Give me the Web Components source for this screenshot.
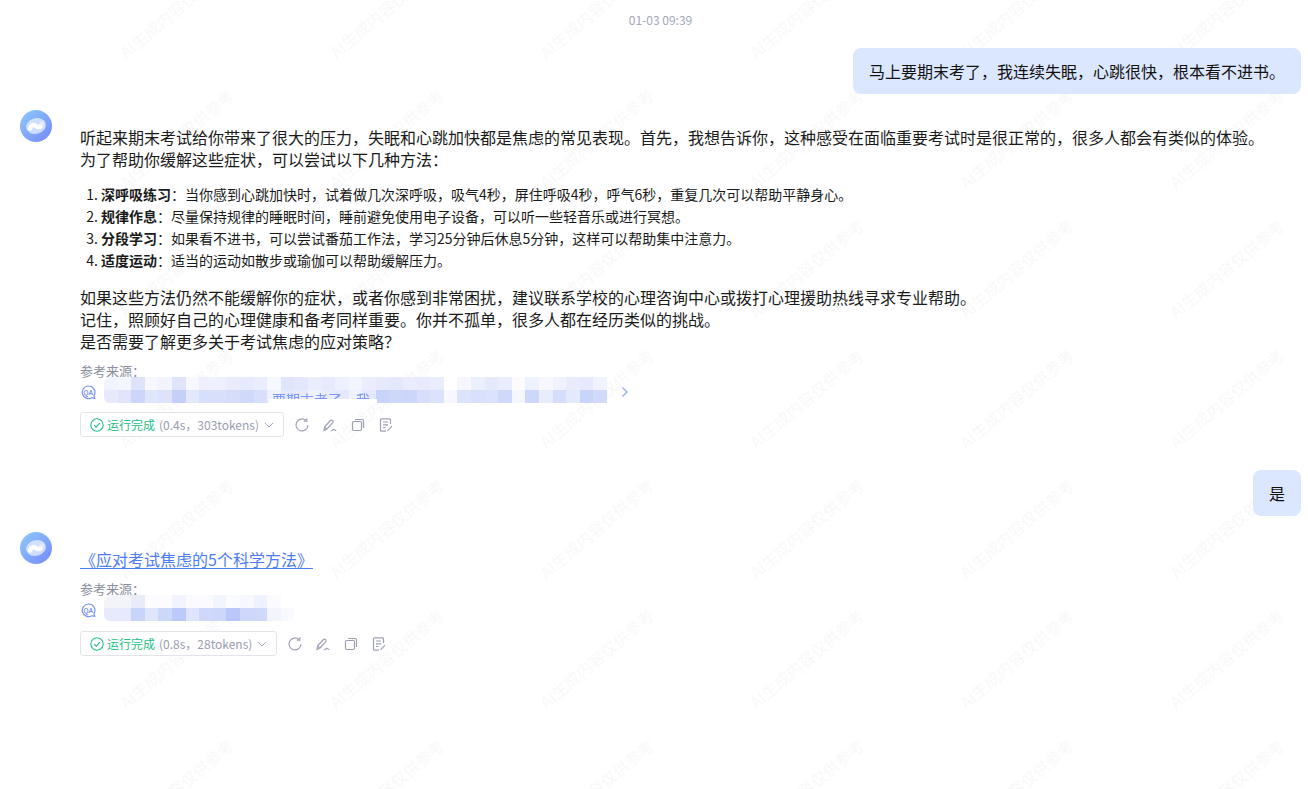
<!DOCTYPE html>
<html lang="zh">
<head>
<meta charset="utf-8">
<title>chat</title>
<style>
  html, body { margin: 0; height: 100%; background: #fff; }
  body {
    font-family: "Noto Sans CJK SC", "Noto Sans", sans-serif;
    color: #1a1a1a;
    overflow: hidden;
    position: relative;
    height: 789px;
  }
</style>
</head>
<body>
<chat-watermark></chat-watermark>
<chat-page>
  <chat-time>01-03 09:39</chat-time>
  <user-msg>马上要期末考了，我连续失眠，心跳很快，根本看不进书。</user-msg>
  <bot-msg>
    <md-block>
      <p>听起来期末考试给你带来了很大的压力，失眠和心跳加快都是焦虑的常见表现。首先，我想告诉你，这种感受在面临重要考试时是很正常的，很多人都会有类似的体验。<br>为了帮助你缓解这些症状，可以尝试以下几种方法：</p>
      <ol>
        <li><b>深呼吸练习</b>：当你感到心跳加快时，试着做几次深呼吸，吸气4秒，屏住呼吸4秒，呼气6秒，重复几次可以帮助平静身心。</li>
        <li><b>规律作息</b>：尽量保持规律的睡眠时间，睡前避免使用电子设备，可以听一些轻音乐或进行冥想。</li>
        <li><b>分段学习</b>：如果看不进书，可以尝试番茄工作法，学习25分钟后休息5分钟，这样可以帮助集中注意力。</li>
        <li><b>适度运动</b>：适当的运动如散步或瑜伽可以帮助缓解压力。</li>
      </ol>
      <p>如果这些方法仍然不能缓解你的症状，或者你感到非常困扰，建议联系学校的心理咨询中心或拨打心理援助热线寻求专业帮助。<br>记住，照顾好自己的心理健康和备考同样重要。你并不孤单，很多人都在经历类似的挑战。<br>是否需要了解更多关于考试焦虑的应对策略？</p>
    </md-block>
    <source-list wide></source-list>
    <run-bar time="0.4s" tokens="303tokens"></run-bar>
  </bot-msg>
  <user-msg style="margin-top:33px">是</user-msg>
  <bot-msg>
    <md-block><p><a href="#">《应对考试焦虑的5个科学方法》</a></p></md-block>
    <source-list></source-list>
    <run-bar time="0.8s" tokens="28tokens" style="margin-top:11px"></run-bar>
  </bot-msg>
</chat-page>

<script>
class ChatPage extends HTMLElement {
  constructor() {
    super();
    this.attachShadow({ mode: 'open' });
    this.shadowRoot.innerHTML = `
      <style>
        :host { display: flex; flex-direction: column; padding: 0 7px 0 20px; position: relative; }
      </style>
      <slot></slot>`;
  }
}

class ChatTime extends HTMLElement {
  constructor() {
    super();
    this.attachShadow({ mode: 'open' });
    this.shadowRoot.innerHTML = `
      <style>
        :host { display: block; height: 48px; padding-top: 11px; box-sizing: border-box; text-align: center; font-size: 12px; line-height: 17px; color: #a3a6ba; }
      </style>
      <slot></slot>`;
  }
}

class UserMsg extends HTMLElement {
  constructor() {
    super();
    this.attachShadow({ mode: 'open' });
    this.shadowRoot.innerHTML = `
      <style>
        :host { display: flex; justify-content: flex-end; }
        div { background: #dbe7fe; border-radius: 8px; padding: 12px 16px; font-size: 16px; line-height: 22px; color: #111; }
      </style>
      <div><slot></slot></div>`;
  }
}

class BotMsg extends HTMLElement {
  constructor() {
    super();
    this.attachShadow({ mode: 'open' });
    this.shadowRoot.innerHTML = `
      <style>
        :host { display: flex; gap: 28px; margin-top: 16px; }
        .avatar { flex: none; width: 32px; height: 32px; }
        .body { flex: 1; min-width: 0; padding-top: 16px; }
      </style>
      <div class="avatar">
        <svg width="32" height="32" viewBox="0 0 32 32">
          <defs>
            <linearGradient id="g" x1="0" y1="0" x2="1" y2="1">
              <stop offset="0" stop-color="#8fcbfb"/><stop offset="1" stop-color="#7488fb"/>
            </linearGradient>
            <linearGradient id="w" x1="0" y1="1" x2="1" y2="0">
              <stop offset="0" stop-color="#fff"/><stop offset=".6" stop-color="#fff"/><stop offset="1" stop-color="#e4eafe"/>
            </linearGradient>
          </defs>
          <circle cx="16" cy="16" r="16" fill="url(#g)"/>
          <ellipse cx="16" cy="16" rx="10" ry="7.800" transform="rotate(-15 16 16)" fill="#e3ebff" opacity=".8"/>
          <path d="M10 18.500C11.500 14.500 14 14.500 16 16S20.500 18 22 13.500" fill="none" stroke="url(#w)" stroke-width="4.500" stroke-linecap="round"/>
        </svg>
      </div>
      <div class="body"><slot></slot></div>`;
  }
}

class MdBlock extends HTMLElement {
  connectedCallback() {
    // the content is moved into the shadow so ol/p get their styles here
    const html = this.innerHTML;
    this.innerHTML = '';
    this.attachShadow({ mode: 'open' }).innerHTML = `
      <style>
        :host { display: block; font-size: 16px; line-height: 22px; color: #1a1a1a; }
        p { margin: 0; }
        ol { margin: 13px 0 15px; padding: 0 0 0 21px; font-size: 14px; line-height: 22px; }
        a { color: #4d7cf6; text-decoration: underline; text-underline-offset: 2px; }
      </style>
      ${html}`;
  }
}

// blurred out rows, each cell is one block of the mosaic
const wideCells = [
  ['f1f3fe','f4f6fe','dde3fb','f7f8ff','f1f3fe','dfe4fb','f6f7ff','eef1fd','eef0fd','e9ecfd','e6eafc','e9edfd','f6f8ff','dfe5fb','e2e7fc','e9edfd','e6eafc','edf0fd','f3f5fe','eaedfd','e6eafc','e3e8fc','e9ecfd','e6eafc','eaedfd','ffffff','f5f6fe','eceffd','e5e9fc','e9edfd','fcfcff','eef1fe','f7f8ff','f0f2fe','e9ecfd','e6eafc','f0f2fe'],
  ['e6eafc','e0e5fc','ccd6fa','dfe5fb','dde3fb','c4d0f9','e3e8fc','d8dffb','d8dffb','d5ddfb','d0d9fa','d8dffb','eef1fe','e5e9fd','e6eafc','eef1fe','e9ecfd','e4e8fc','eef1fe','e5e9fd','c8d3f9','cdd7fa','ccd6fa','d6defb','dbe2fb','f6f7ff','dde3fb','d9e0fb','dbe2fb','d0d9fa','f5f7ff','cdd7fa','e8ecfd','d5ddfb','e5e9fd','c9d4fa','d2dafb']
];
const shortCells = [
  ['f3f4fa','f3f4fa','e9ebf8','fcfcff','fcfcff','f1f3fe','fbfbff','fbfbff','f3f5fe','fafbff','f7f8ff','eef1fe','fafaff','ffffff'],
  ['e6eafc','e6eafc','c9d4fa','dfe5fb','cdd7fa','bcc9f9','dfe5fc','cfd8fa','cdd7fa','bac8f9','cfd8fa','d0d9fa','f3f5fe','f9faff']
];

class SourceList extends HTMLElement {
  connectedCallback() {
    const wide = this.hasAttribute('wide');
    const rows = (wide ? wideCells : shortCells).map(r =>
      `<div class="r">${r.map(c => `<i style="background:#${c}"></i>`).join('')}</div>`).join('');
    this.attachShadow({ mode: 'open' }).innerHTML = `
      <style>
        :host { display: block; margin-top: ${wide ? 10 : 10}px; }
        .label { font-size: 13px; line-height: 18px; color: #8c8f9e; }
        .src { display: flex; align-items: center; height: 20px; margin-top: ${wide ? 2 : 2}px; gap: 8px; }
        .icon { flex: none; margin-left: 1px; }
        .mosaic { display: flex; flex-direction: column; position: relative; margin-top: -5px; filter: blur(.7px); border-radius: 6px 0 0 6px; overflow: hidden; }
        .r { display: flex; height: 13px; }
        i { display: block; width: 13.6px; }
        .peek { position: absolute; left: 168px; top: 13px; height: 9px; width: 100px; overflow: hidden; font-size: 14px; line-height: 18px; color: #7e97f6; white-space: nowrap; }
        .cover { position: absolute; left: 165px; top: 22px; height: 4px; width: 108px; background: #fff; }
        .tail { margin-left: 6px; display: flex; }
      </style>
      <div class="label">参考来源：</div>
      <div class="src">
        <svg class="icon" width="15" height="15" viewBox="0 0 15 15" fill="none" stroke="#7a93f5" stroke-width="1.200">
          <path d="M7.500 1a6.300 6.300 0 1 0 3.300 11.700l2.900.8-.7-2.900A6.300 6.300 0 0 0 7.500 1z"/>
          <text x="7.300" y="9.600" text-anchor="middle" font-size="6.500" font-weight="700" stroke="none" fill="#7a93f5" font-family="Liberation Sans, sans-serif">QA</text>
        </svg>
        <div class="mosaic">${rows}${wide ? '<span class="cover"></span><span class="peek">要期末考了，我</span>' : ''}</div>
        ${wide ? `<span class="tail"><svg width="8" height="12" viewBox="0 0 8 12" fill="none" stroke="#8ea6f8" stroke-width="1.200"><path d="M1.500 1.500 6 6l-4.500 4.500"/></svg></span>` : ''}
      </div>`;
  }
}

class RunBar extends HTMLElement {
  connectedCallback() {
    const time = this.getAttribute('time');
    const tokens = this.getAttribute('tokens');
    this.attachShadow({ mode: 'open' }).innerHTML = `
      <style>
        :host { display: flex; align-items: center; margin-top: 10px; }
        .pill { display: flex; align-items: center; height: 25px; box-sizing: border-box; border: 1px solid #e2e4ea; border-radius: 3px; padding: 0 9px; font-size: 12px; background: #fff; }
        .ok { color: #1fbf85; margin: 0 4px 0 3px; }
        .meta { color: #9a9db0; }
        .down { margin-left: 5px; }
        .tools { display: flex; gap: 12px; margin-left: 10px; }
        .tools svg { display: block; }
      </style>
      <div class="pill">
        <svg width="14" height="14" viewBox="0 0 14 14" fill="none" stroke="#1fbf85" stroke-width="1.100"><circle cx="7" cy="7" r="6.200"/><path d="M4.200 7.200l2 2 3.600-4"/></svg>
        <span class="ok">运行完成</span><span class="meta">(${time}，${tokens})</span>
        <svg class="down" width="10" height="10" viewBox="0 0 10 10" fill="none" stroke="#a3a6ba" stroke-width="1"><path d="M1 3l4 4 4-4"/></svg>
      </div>
      <div class="tools">
        <svg width="16" height="16" viewBox="0 0 16 16" fill="none" stroke="#9ea1b4" stroke-width="1.200"><path d="M14 8.300A6 6 0 1 1 11.800 3.300M12.800 1.200v3h-3"/></svg>
        <svg width="16" height="16" viewBox="0 0 16 16" fill="none" stroke="#9ea1b4" stroke-width="1.200"><path d="M2 13.500l.6-3.600 5.900-6.400a1.300 1.300 0 0 1 1.900 0l.3.300a1.300 1.300 0 0 1 0 1.900L5 12zM2.600 9.900L5 12M8.800 14c1.500 0 1.700-1.700 3-1.700s1 1.300 2.500 1.100"/></svg>
        <svg width="16" height="16" viewBox="0 0 16 16" fill="none" stroke="#9ea1b4" stroke-width="1.200"><rect x="2.500" y="4.500" width="9" height="9" rx="1.200"/><path d="M5 2.500h7.300a1.200 1.200 0 0 1 1.200 1.200V11"/></svg>
        <svg width="16" height="16" viewBox="0 0 16 16" fill="none" stroke="#9ea1b4" stroke-width="1.200"><path d="M12.500 7V2.800a1 1 0 0 0-1-1h-8a1 1 0 0 0-1 1v10.400a1 1 0 0 0 1 1h4.500M5 5h5M5 7.800h5M5 10.500h2.500M9.500 13.800l4.500-4.600"/></svg>
      </div>`;
  }
}

class ChatWatermark extends HTMLElement {
  connectedCallback() {
    let marks = '';
    for (let row = 0; row < 7; row++) {
      for (let col = 0; col < 6; col++) {
        // left/top are the free canvas places of the repeated mark
        marks += `<span style="left:${127 + col * 210}px;top:${60 + row * 130}px">AI生成内容仅供参考</span>`;
      }
    }
    this.attachShadow({ mode: 'open' }).innerHTML = `
      <style>
        :host { position: absolute; inset: 0; overflow: hidden; pointer-events: none; display: block; }
        span { position: absolute; font-size: 16px; line-height: 1; white-space: nowrap; color: #f8f8fa; transform-origin: 0 100%; transform: translateY(-16px) rotate(-40deg); }
      </style>
      ${marks}`;
  }
}

customElements.define('chat-page', ChatPage);
customElements.define('chat-time', ChatTime);
customElements.define('user-msg', UserMsg);
customElements.define('bot-msg', BotMsg);
customElements.define('md-block', MdBlock);
customElements.define('source-list', SourceList);
customElements.define('run-bar', RunBar);
customElements.define('chat-watermark', ChatWatermark);
</script>
</body>
</html>
